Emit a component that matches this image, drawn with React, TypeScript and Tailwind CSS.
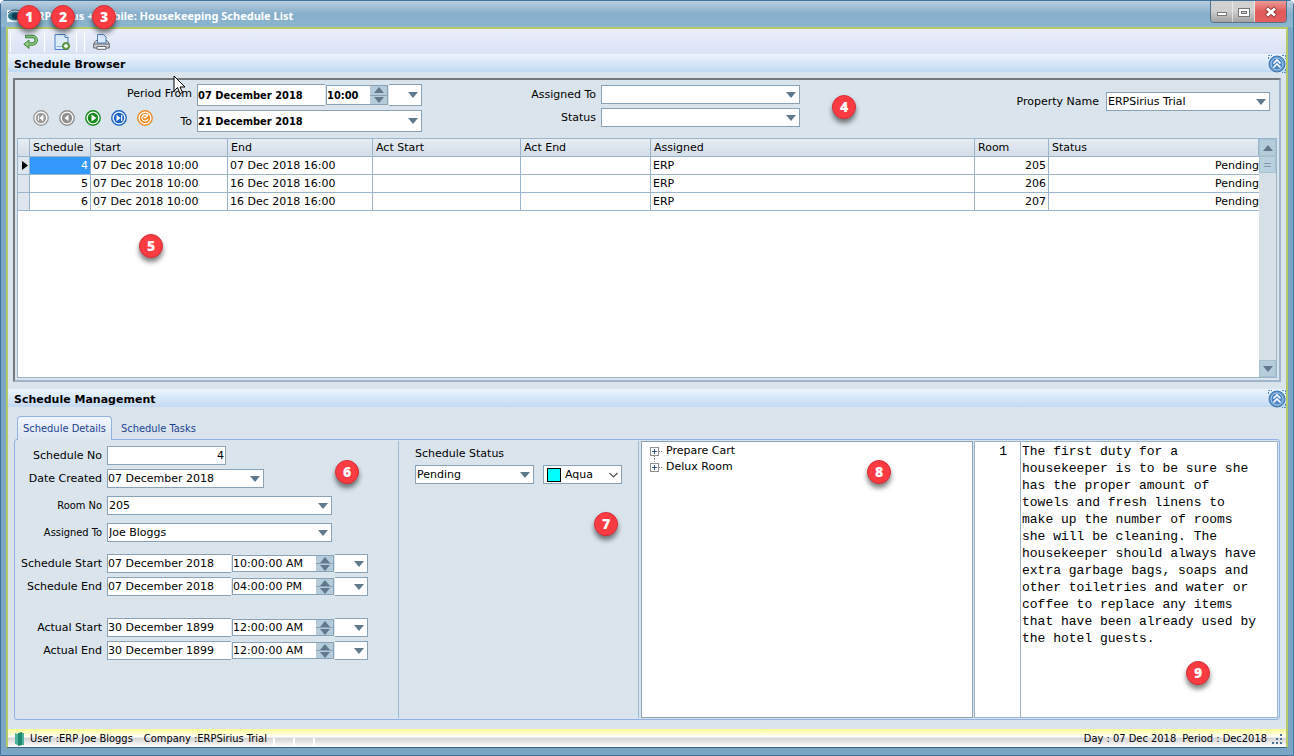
import type { ReactNode } from "react";

interface Schedule {
  id: number;
  start: string;
  end: string;
  assigned: string;
  room: number;
  status: string;
}

const schedules: Schedule[] = [
  { id: 4, start: "07 Dec 2018 10:00", end: "07 Dec 2018 16:00", assigned: "ERP", room: 205, status: "Pending" },
  { id: 5, start: "07 Dec 2018 10:00", end: "16 Dec 2018 16:00", assigned: "ERP", room: 206, status: "Pending" },
  { id: 6, start: "07 Dec 2018 10:00", end: "16 Dec 2018 16:00", assigned: "ERP", room: 207, status: "Pending" },
];

const notes = [
  "The first duty for a",
  "housekeeper is to be sure she",
  "has the proper amount of",
  "towels and fresh linens to",
  "make up the number of rooms",
  "she will be cleaning. The",
  "housekeeper should always have",
  "extra garbage bags, soaps and",
  "other toiletries and water or",
  "coffee to replace any items",
  "that have been already used by",
  "the hotel guests.",
].join("\n");

const condensed = "font-['DejaVu_Sans_Condensed','DejaVu_Sans',sans-serif]";

function Arrow({ up = false }: { up?: boolean }) {
  return (
    <svg className="block w-[10px] h-[6px]" viewBox="0 0 10 6">
      <path d={up ? "M0 6 5 0l5 6z" : "M0 0h10L5 6z"} fill="#5f7a8c" />
    </svg>
  );
}

function Badge({ n, className }: { n: number; className: string }) {
  return (
    <span
      className={`absolute flex size-6 items-center justify-center rounded-full border border-[#d92b35] bg-[#fb3b42] font-['Open_Sans',sans-serif] text-sm font-extrabold text-white shadow-[0_4px_5px_rgba(0,0,0,0.5)] ${className}`}
    >
      {n}
    </span>
  );
}

interface DropDownProps {
  id: string;
  value: string;
  className: string;
}

function DropDown({ id, value, className }: DropDownProps) {
  return (
    <div className={`relative h-[19px] border border-[#8aa2b6] bg-white ${className}`}>
      <select id={id} className="block h-full w-full appearance-none bg-transparent pl-px pr-5 outline-none">
        <option>{value}</option>
      </select>
      <span className="pointer-events-none absolute right-[3px] top-[6px]">
        <Arrow />
      </span>
    </div>
  );
}

function DateBox({ id, value, className }: { id: string; value: string; className: string }) {
  return (
    <div className={`flex items-center border border-[#8aa2b6] bg-white pr-[3px] ${className}`}>
      <input id={id} defaultValue={value} className="h-full min-w-0 flex-1 bg-transparent outline-none" />
      <button type="button" aria-label="Open calendar">
        <Arrow />
      </button>
    </div>
  );
}

interface DateTimeProps {
  id: string;
  date: string;
  time: string;
  height: string;
  dateWidth: string;
  timeWidth: string;
}

function DateTime({ id, date, time, height, dateWidth, timeWidth }: DateTimeProps) {
  return (
    <div className={`flex items-center ${height}`}>
      <input
        id={id}
        defaultValue={date}
        className={`h-full border border-r-0 border-[#8aa2b6] bg-white outline-none ${dateWidth}`}
      />
      <div className={`ml-px flex h-[calc(100%-2px)] border border-[#8aa2b6] bg-white ${timeWidth}`}>
        <input aria-label={`${id} time`} defaultValue={time} className="h-full min-w-0 flex-1 bg-transparent outline-none" />
        <div className="flex w-[17px] flex-col gap-px bg-[#8aa2b6]">
          <button type="button" aria-label="Increase" className="flex flex-1 items-center justify-center bg-[#b5cbd9]">
            <Arrow up />
          </button>
          <button type="button" aria-label="Decrease" className="flex flex-1 items-center justify-center bg-[#b5cbd9]">
            <Arrow />
          </button>
        </div>
      </div>
      <button
        type="button"
        aria-label="Open calendar"
        className="ml-px flex h-full w-[33px] items-center justify-end border border-l-0 border-[#8aa2b6] bg-white pr-[3px]"
      >
        <Arrow />
      </button>
    </div>
  );
}

function NavButton({ label, color, children }: { label: string; color: string; children: ReactNode }) {
  return (
    <button type="button" aria-label={label}>
      <svg className="block size-4" viewBox="0 0 16 16" fill="none">
        <circle cx="8" cy="8" r="7.2" fill="#fff" stroke={color} strokeWidth="1.4" />
        <circle cx="8" cy="8" r="5.2" fill={color} />
        {children}
      </svg>
    </button>
  );
}

function PanelHeader({ title }: { title: string }) {
  return (
    <div className="flex h-[18px] items-center justify-between bg-linear-to-b from-[#ecf5fe] to-[#c3d9f2] pl-[6px] font-bold">
      <h2 className="pt-1">{title}</h2>
      <button type="button" aria-label={`Collapse ${title}`} className="pt-[2px]">
        <svg className="block size-[18px]" viewBox="0 0 18 18" fill="none">
          <path d="M.5 4V.5H4M14 .5h3.500V4M17.500 14v3.500H14" stroke="#4583bd" strokeDasharray="2 1" />
          <circle cx="9" cy="9" r="8" fill="#5c94cc" stroke="#3f77ae" />
          <circle cx="9" cy="9" r="6" fill="#4c86c3" stroke="#a9cbea" />
          <path d="M5.500 8.500 9 5l3.500 3.500M5.500 12.500 9 9l3.500 3.500" stroke="#fff" strokeWidth="1.600" />
        </svg>
      </button>
    </div>
  );
}

function TitleBar() {
  const windowButton = "flex h-full items-center justify-center border-white/50 border-r bg-linear-to-b from-[#d0d0d0] from-45% to-[#a3a3a3]";
  return (
    <header className="flex h-[26px] items-start justify-between bg-linear-to-b from-[#b9cfdf] via-[#86aecb] to-[#8db7d0] px-[6px]">
      <div className="flex h-full items-center gap-2 pt-[3px]">
        <svg className="size-4" viewBox="0 0 16 16">
          <rect y="2" width="16" height="12" fill="#e8f1f5" />
          <ellipse cx="8" cy="8" rx="7" ry="4.500" fill="#287588" />
          <circle cx="8" cy="8" r="3" fill="#123c55" />
          <path d="M1 5c4-4 10-4 14 0" stroke="#245" fill="none" />
        </svg>
        <h1 className="font-['Noto_Sans',sans-serif] text-[11px] font-bold text-white">
          ERP Sirius + Mobile: Housekeeping Schedule List
        </h1>
      </div>
      <div className="flex h-[22px] w-[77px] overflow-hidden rounded-b-[4px] border border-t-0 border-[#55718a]">
        <button type="button" aria-label="Minimize" className={`w-[22px] ${windowButton}`}>
          <svg className="size-3" viewBox="0 0 12 12">
            <rect x="1.500" y="6.500" width="9" height="3" fill="#fff" stroke="#777" />
          </svg>
        </button>
        <button type="button" aria-label="Maximize" className={`w-[22px] ${windowButton}`}>
          <svg className="size-3" viewBox="0 0 12 12">
            <rect x=".5" y="2.500" width="11" height="8" fill="#fff" stroke="#777" />
            <rect x="3.500" y="5.500" width="5" height="2" fill="#ccc" stroke="#777" />
          </svg>
        </button>
        <button
          type="button"
          aria-label="Close"
          className="flex h-full flex-1 items-center justify-center bg-linear-to-b from-[#eb9a99] via-[#e05a58] to-[#e2605e]"
        >
          <svg className="size-3" viewBox="0 0 12 12">
            <path d="m1.500 2 9 8m0-8-9 8" stroke="#8d3a3c" strokeWidth="4.500" />
            <path d="m2 2.500 8 7m0-7-8 7" stroke="#fff" strokeWidth="2.800" />
          </svg>
        </button>
      </div>
    </header>
  );
}

function ToolBar() {
  return (
    <div className="flex h-[25px] items-center bg-linear-to-b from-[#ebeffa] to-[#d9e2f4]">
      <span className="ml-[2px] h-5 w-px bg-white" />
      <button type="button" aria-label="Back" className="ml-3">
        <svg className="block size-4" viewBox="0 0 16 16" fill="none">
          <path d="M2 2.500h7.500a3.700 3.700 0 0 1 0 7.500H6" stroke="#43853e" strokeWidth="3.400" />
          <path d="M6 6v8.500L.8 10.200z" fill="#8cc882" stroke="#43853e" />
          <path d="M2.700 2.500h6.800a3.700 3.700 0 0 1 0 7.500H5" stroke="#8cc882" strokeWidth="1.600" />
        </svg>
      </button>
      <span className="ml-[5px] h-5 w-px bg-white" />
      <button type="button" aria-label="New schedule" className="ml-[9px]">
        <svg className="block size-4" viewBox="0 0 16 16" fill="none">
          <path d="M1 .5h10l3 3v12H1z" fill="#dcebfa" stroke="#4a7fc0" />
          <path d="M11 .5v3h3" fill="#fff" stroke="#4a7fc0" />
          <path d="M2.500 12.500h7" stroke="#8fb5e0" />
          <circle cx="12" cy="12" r="3.500" fill="#74ad55" stroke="#3f7d33" />
          <path d="M12 10v4M10 12h4" stroke="#fff" strokeWidth="1.300" />
        </svg>
      </button>
      <span className="ml-[6px] h-5 w-px bg-white" />
      <span className="ml-[7px] h-5 w-px bg-white" />
      <button type="button" aria-label="Print" className="ml-2">
        <svg className="block h-4 w-[17px]" viewBox="0 0 17 16" fill="none">
          <path d="M3 6.500h11l2.300 3v4.500H.7V9.500z" fill="#cdd0d4" stroke="#62676f" />
          <path d="M4.500 9V.5h6l2.500 2.500v6z" fill="#d9e9fb" stroke="#4a7fc0" />
          <path d="M1 10h15" stroke="#62676f" />
          <path d="M4 12.500h9v2.800H4z" fill="#fff" stroke="#62676f" />
        </svg>
      </button>
    </div>
  );
}

function FilterBar() {
  return (
    <div className="flex h-[58px] items-start justify-between pr-[7px]">
      <div className="flex">
        <div className="grid w-[405px] shrink-0 grid-cols-[1fr_225px] gap-x-[5px] gap-y-1 pl-4 pt-[4px]">
          <label htmlFor="period-from" className="pt-[3px] text-right">Period From</label>
          <div className={`font-bold ${condensed}`}>
            <DateTime id="period-from" date="07 December 2018" time="10:00" height="h-[22px]" dateWidth="w-[128px]" timeWidth="w-[62px]" />
          </div>
          <div className="flex items-center justify-between">
            <div className="flex gap-[10px] pb-2">
              <NavButton label="First" color="#9b9b9b">
                <path d="M5.500 5.500v5M10 5.500 7 8l3 2.500z" stroke="#fff" fill="#fff" />
              </NavButton>
              <NavButton label="Previous" color="#8e8e8e">
                <path d="M9.500 4.800v6.400L5.500 8z" fill="#fff" />
              </NavButton>
              <NavButton label="Run" color="#168a1c">
                <path d="M6.500 4.500v7l5-3.500z" fill="#fff" />
              </NavButton>
              <NavButton label="Last" color="#1c62c4">
                <path d="M5.500 4.800v6.400L9.500 8zM10 5h1.300v6H10z" fill="#fff" />
              </NavButton>
              <NavButton label="Refresh" color="#f08a24">
                <path d="M10.800 6.200A3.200 3.200 0 1 0 11 9M11 4.500 8 8 6.500 6.500" stroke="#fff" strokeWidth="1.200" />
              </NavButton>
            </div>
            <label htmlFor="period-to">To</label>
          </div>
          <DateBox id="period-to" value="21 December 2018" className={`h-[22px] font-bold ${condensed}`} />
        </div>
        <div className="ml-[106px] grid grid-cols-[68px_199px] content-start items-center gap-x-[5px] gap-y-1 pt-[5px] text-right">
          <label htmlFor="filter-assigned" className="whitespace-nowrap">Assigned To</label>
          <DropDown id="filter-assigned" value="" className="w-full" />
          <label htmlFor="filter-status">Status</label>
          <DropDown id="filter-status" value="" className="w-full" />
        </div>
      </div>
      <div className="flex items-center gap-[7px] pt-3">
        <label htmlFor="property">Property Name</label>
        <DropDown id="property" value="ERPSirius Trial" className="w-[164px]" />
      </div>
    </div>
  );
}

function ScheduleTable() {
  const head = "border-b border-r border-[#9ab4cc] bg-linear-to-b from-[#e6edf3] to-[#d3dee8] px-[3px] font-normal";
  const cell = "border-b border-r border-[#9ab4cc] px-[2px]";
  return (
    <div className="flex min-h-0 flex-1 border border-[#9ab4cc] bg-white">
      <div className="min-w-0 flex-1 overflow-hidden">
        <table className="w-full table-fixed border-separate border-spacing-0 text-left">
          <colgroup>
            <col className="w-[12px]" />
            <col className="w-[61px]" />
            <col className="w-[137px]" />
            <col className="w-[145px]" />
            <col className="w-[148px]" />
            <col className="w-[130px]" />
            <col className="w-[324px]" />
            <col className="w-[74px]" />
            <col />
          </colgroup>
          <thead>
            <tr className="h-[18px]">
              <th className={head} />
              <th className={head}>Schedule</th>
              <th className={head}>Start</th>
              <th className={head}>End</th>
              <th className={head}>Act Start</th>
              <th className={head}>Act End</th>
              <th className={head}>Assigned</th>
              <th className={head}>Room</th>
              <th className={head}>Status</th>
            </tr>
          </thead>
          <tbody>
            {schedules.map((s, i) => (
              <tr key={s.id} className="h-[18px]">
                <td className="border-b border-r border-[#9ab4cc] bg-[#dde6ee] pl-1">
                  {i === 0 && (
                    <svg className="block h-[9px] w-[6px]" viewBox="0 0 6 9">
                      <path d="M0 0v9l6-4.500z" />
                    </svg>
                  )}
                </td>
                <td className={`${cell} text-right ${i === 0 ? "bg-[#3399ff] text-white" : ""}`}>{s.id}</td>
                <td className={cell}>{s.start}</td>
                <td className={cell}>{s.end}</td>
                <td className={cell} />
                <td className={cell} />
                <td className={cell}>{s.assigned}</td>
                <td className={`${cell} text-right`}>{s.room}</td>
                <td className="border-b border-[#9ab4cc] text-right">{s.status}</td>
              </tr>
            ))}
          </tbody>
        </table>
      </div>
      <div className="flex w-[17px] flex-col bg-[#d5e0e7]">
        <button type="button" aria-label="Scroll up" className="flex h-[17px] items-center justify-center border border-[#a9c0cf] bg-[#b5cddb]">
          <Arrow up />
        </button>
        <div className="flex h-[17px] flex-col items-center justify-center gap-[2px] border border-[#a9c0cf] bg-[#b9d0de]">
          <span className="h-px w-[7px] bg-[#7d9bb0]" />
          <span className="h-px w-[7px] bg-[#7d9bb0]" />
        </div>
        <button type="button" aria-label="Scroll down" className="mt-auto flex h-[17px] items-center justify-center border border-[#a9c0cf] bg-[#b5cddb]">
          <Arrow />
        </button>
      </div>
    </div>
  );
}

interface FormRowProps {
  id: string;
  label: string;
  small?: boolean;
  className?: string;
  children: ReactNode;
}

function FormRow({ id, label, small = false, className = "", children }: FormRowProps) {
  return (
    <div className={`flex items-center gap-[5px] ${className}`}>
      <label htmlFor={id} className={`w-[86px] shrink-0 whitespace-nowrap text-right ${small ? condensed : ""}`}>
        {label}
      </label>
      {children}
    </div>
  );
}

function DetailsForm() {
  return (
    <form className="w-[383px] shrink-0 border-r border-[#9dbadb] pt-[5px]">
      <FormRow id="no" label="Schedule No">
        <input id="no" defaultValue="4" className="h-[19px] w-[119px] border border-[#8aa2b6] bg-white pr-px text-right outline-none" />
      </FormRow>
      <FormRow id="created" label="Date Created" className="mt-1">
        <DateBox id="created" value="07 December 2018" className="h-[19px] w-[157px]" />
      </FormRow>
      <FormRow id="room" label="Room No" small className="mt-2">
        <DropDown id="room" value="205" className="w-[225px]" />
      </FormRow>
      <FormRow id="assigned" label="Assigned To" small className="mt-2">
        <DropDown id="assigned" value="Joe Bloggs" className="w-[225px]" />
      </FormRow>
      <FormRow id="start" label="Schedule Start" className="mt-3">
        <DateTime id="start" date="07 December 2018" time="10:00:00 AM" height="h-[19px]" dateWidth="w-[124px]" timeWidth="w-[102px]" />
      </FormRow>
      <FormRow id="end" label="Schedule End" className="mt-1">
        <DateTime id="end" date="07 December 2018" time="04:00:00 PM" height="h-[19px]" dateWidth="w-[124px]" timeWidth="w-[102px]" />
      </FormRow>
      <FormRow id="actual-start" label="Actual Start" className="mt-[22px]">
        <DateTime id="actual-start" date="30 December 1899" time="12:00:00 AM" height="h-[19px]" dateWidth="w-[124px]" timeWidth="w-[102px]" />
      </FormRow>
      <FormRow id="actual-end" label="Actual End" className="mt-1">
        <DateTime id="actual-end" date="30 December 1899" time="12:00:00 AM" height="h-[19px]" dateWidth="w-[124px]" timeWidth="w-[102px]" />
      </FormRow>
    </form>
  );
}

function StatusForm() {
  return (
    <div className="w-[240px] shrink-0 border-r border-[#9dbadb] pl-4 pt-[6px]">
      <label htmlFor="status" className="block">Schedule Status</label>
      <div className="mt-1 flex gap-[9px]">
        <DropDown id="status" value="Pending" className="w-[119px]" />
        <div className="flex h-[19px] w-[79px] items-center border border-[#8aa2b6] bg-white pl-[3px]">
          <span className="size-[14px] shrink-0 border border-black bg-[#00ffff]" />
          <select aria-label="Colour" className="min-w-0 flex-1 appearance-none bg-transparent pl-1 outline-none">
            <option>Aqua</option>
          </select>
          <svg className="mr-[3px] block h-[6px] w-[9px]" viewBox="0 0 9 6" fill="none">
            <path d="m.5 1 4 4 4-4" stroke="#555" strokeWidth="1.200" />
          </svg>
        </div>
      </div>
    </div>
  );
}

function TaskTree() {
  return (
    <ul className="w-[332px] shrink-0 border border-[#8aa2b6] bg-white pl-2 pt-px leading-4">
      {["Prepare Cart", "Delux Room"].map((task, i) => (
        <li key={task} className="flex h-4 items-center gap-[3px]">
          <svg className="block h-4 w-[13px]" viewBox="0 0 13 16" fill="none">
            <path d={i === 0 ? "M4.500 13v3" : "M4.500 0v3"} stroke="#888" strokeDasharray="1 1" />
            <path d="M9 8.500h4" stroke="#888" strokeDasharray="1 1" />
            <rect x=".5" y="4.500" width="8" height="8" fill="#fff" stroke="#919191" />
            <path d="M2 8.500h5M4.500 6v5" stroke="#2f5a94" />
          </svg>
          {task}
        </li>
      ))}
    </ul>
  );
}

function Notes() {
  return (
    <div className="flex min-w-0 flex-1 border border-[#9ab4cc] bg-white font-['Liberation_Mono',monospace] text-[13px] leading-[17px]">
      <div className="w-[46px] shrink-0 border-r border-[#9ab4cc] pr-[13px] pt-px text-right">1</div>
      <textarea
        aria-label="Task notes"
        defaultValue={notes}
        className="block h-full min-w-0 flex-1 resize-none overflow-hidden bg-transparent pl-px pt-px outline-none"
      />
    </div>
  );
}

function StatusBar() {
  return (
    <footer
      className={`flex h-[18px] items-center bg-[linear-gradient(#ffff94,#ffffff_45%,#d2d2d2_50%,#ffffff)] pl-[7px] pr-[3px] pt-[2px] ${condensed}`}
    >
      <svg className="h-[14px] w-[10px]" viewBox="0 0 10 14">
        <path d="m0 1 3 1v11l-3-1zM9 1v12H7V1z" fill="#4fb39a" />
        <path d="m3 1 4-1v13l-4 1z" fill="#1f8a70" />
      </svg>
      <span className="ml-[5px]">User :ERP Joe Bloggs</span>
      <span className="ml-[11px]">Company :ERPSirius Trial</span>
      <span className="ml-[6px] flex h-full items-end gap-[18px]">
        <i className="h-[9px] w-[2px] bg-white" />
        <i className="h-[9px] w-[2px] bg-white" />
        <i className="h-[9px] w-[2px] bg-white" />
      </span>
      <span className="ml-auto">Day : 07 Dec 2018</span>
      <span className="ml-[6px]">Period : Dec2018</span>
      <svg className="ml-[5px] size-[11px]" viewBox="0 0 11 11" fill="#4a6f94">
        <path d="M0 8h2v2H0zM4 8h2v2H4zM8 8h2v2H8zM4 4h2v2H4zM8 4h2v2H8zM8 0h2v2H8z" />
      </svg>
    </footer>
  );
}

export default function App() {
  return (
    <div className="relative flex min-h-screen flex-col rounded-t-[5px] border border-[#41719a] bg-[#7aa5c4] font-['DejaVu_Sans',sans-serif] text-[11px] leading-[14px] text-black">
      <TitleBar />
      <div className="mx-[5px] mb-[7px] flex flex-1 flex-col border-2 border-b border-[#b3c96a] border-b-[#3c6187] bg-[#d9e4ec]">
        <ToolBar />
        <PanelHeader title="Schedule Browser" />
        <section className="mx-[5px] mb-[7px] mt-[6px] flex flex-1 flex-col border-2 border-[#74797e] border-b-[#9fb4c8] border-r-[#9fb4c8] p-[2px] pt-0">
          <FilterBar />
          <ScheduleTable />
        </section>
        <PanelHeader title="Schedule Management" />
        <div className="mx-[6px] mt-[9px]">
          <div role="tablist" className={`flex h-[23px] pl-[3px] text-[#1c4293] ${condensed}`}>
            <button type="button" role="tab" aria-selected="true" className="h-6 rounded-t-[4px] border border-b-0 border-[#8fb1e6] bg-linear-to-b from-[#f0f6fd] to-[#dbe6f0] px-[5px] pt-px">
              Schedule Details
            </button>
            <button type="button" role="tab" aria-selected="false" className="px-[9px] pt-[3px]">
              Schedule Tasks
            </button>
          </div>
          <div className="mb-[9px] flex h-[281px] rounded-[3px] border border-[#8fb1e6] p-px">
            <DetailsForm />
            <StatusForm />
            <div className="flex min-w-0 flex-1 gap-px pl-[2px]">
              <TaskTree />
              <Notes />
            </div>
          </div>
        </div>
        <StatusBar />
      </div>

      <Badge n={1} className="left-[16px] top-[4px]" />
      <Badge n={2} className="left-[50px] top-[4px]" />
      <Badge n={3} className="left-[91px] top-[4px]" />
      <Badge n={4} className="left-[831px] top-[94px]" />
      <Badge n={5} className="left-[138px] top-[233px]" />
      <Badge n={6} className="left-[334px] top-[459px]" />
      <Badge n={7} className="left-[593px] top-[511px]" />
      <Badge n={8} className="left-[866px] top-[459px]" />
      <Badge n={9} className="left-[1185px] top-[660px]" />

      <svg className="pointer-events-none absolute left-[172px] top-[74px] h-[20px] w-[13px]" viewBox="0 0 13 20">
        <path d="M1 1v15l3.500-3.500L7 18.500l2.500-1L7 12h5z" fill="#fff" stroke="#000" />
      </svg>
    </div>
  );
}
